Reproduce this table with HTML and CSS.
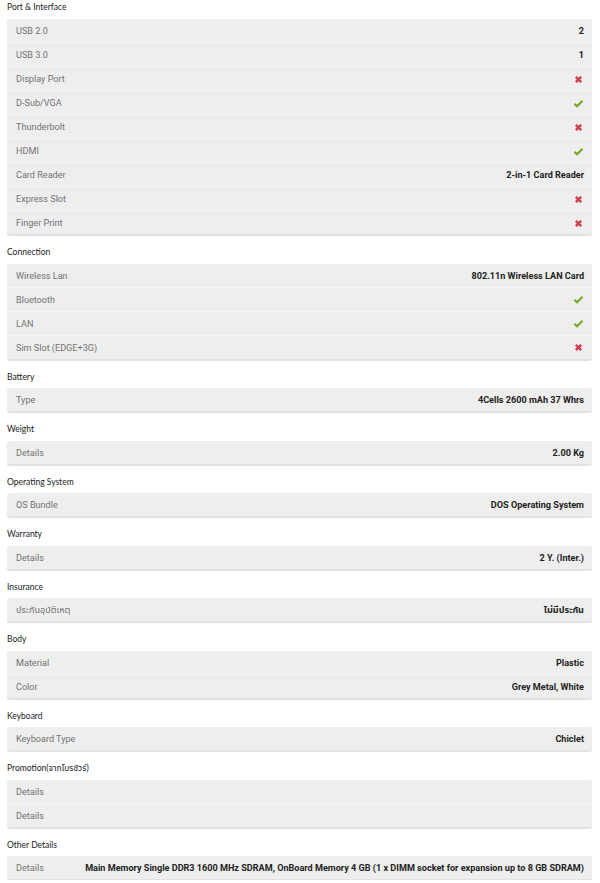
FILE: index.html
```html
<!DOCTYPE html>
<html>
<head>
<meta charset="utf-8">
<link rel="stylesheet" href="styles.css">
</head>
<body>
<div class="specs">

<div class="title first">Port &amp; Interface</div>
<div class="card">
  <div class="row"><span class="label">USB 2.0</span><span class="value">2</span></div>
  <div class="row"><span class="label">USB 3.0</span><span class="value">1</span></div>
  <div class="row"><span class="label">Display Port</span><span class="value"><svg class="no" viewBox="0 0 10 10"><path d="M2 2L8 8M8 2L2 8"/></svg></span></div>
  <div class="row"><span class="label">D-Sub/VGA</span><span class="value"><svg class="yes" viewBox="0 0 12 10"><path d="M1.5 5.5L4.5 8L10.5 2"/></svg></span></div>
  <div class="row"><span class="label">Thunderbolt</span><span class="value"><svg class="no" viewBox="0 0 10 10"><path d="M2 2L8 8M8 2L2 8"/></svg></span></div>
  <div class="row"><span class="label">HDMI</span><span class="value"><svg class="yes" viewBox="0 0 12 10"><path d="M1.5 5.5L4.5 8L10.5 2"/></svg></span></div>
  <div class="row"><span class="label">Card Reader</span><span class="value">2-in-1 Card Reader</span></div>
  <div class="row"><span class="label">Express Slot</span><span class="value"><svg class="no" viewBox="0 0 10 10"><path d="M2 2L8 8M8 2L2 8"/></svg></span></div>
  <div class="row"><span class="label">Finger Print</span><span class="value"><svg class="no" viewBox="0 0 10 10"><path d="M2 2L8 8M8 2L2 8"/></svg></span></div>
</div>

<div class="title">Connection</div>
<div class="card">
  <div class="row"><span class="label">Wireless Lan</span><span class="value">802.11n Wireless LAN Card</span></div>
  <div class="row"><span class="label">Bluetooth</span><span class="value"><svg class="yes" viewBox="0 0 12 10"><path d="M1.5 5.5L4.5 8L10.5 2"/></svg></span></div>
  <div class="row"><span class="label">LAN</span><span class="value"><svg class="yes" viewBox="0 0 12 10"><path d="M1.5 5.5L4.5 8L10.5 2"/></svg></span></div>
  <div class="row"><span class="label">Sim Slot (EDGE+3G)</span><span class="value"><svg class="no" viewBox="0 0 10 10"><path d="M2 2L8 8M8 2L2 8"/></svg></span></div>
</div>

<div class="title">Battery</div>
<div class="card">
  <div class="row"><span class="label">Type</span><span class="value">4Cells 2600 mAh 37 Whrs</span></div>
</div>

<div class="title">Weight</div>
<div class="card">
  <div class="row"><span class="label">Details</span><span class="value">2.00 Kg</span></div>
</div>

<div class="title">Operating System</div>
<div class="card">
  <div class="row"><span class="label">OS Bundle</span><span class="value">DOS Operating System</span></div>
</div>

<div class="title">Warranty</div>
<div class="card">
  <div class="row"><span class="label">Details</span><span class="value">2 Y. (Inter.)</span></div>
</div>

<div class="title">Insurance</div>
<div class="card">
  <div class="row"><span class="label">ประกันอุบัติเหตุ</span><span class="value">ไม่มีประกัน</span></div>
</div>

<div class="title">Body</div>
<div class="card">
  <div class="row"><span class="label">Material</span><span class="value">Plastic</span></div>
  <div class="row"><span class="label">Color</span><span class="value">Grey Metal, White</span></div>
</div>

<div class="title">Keyboard</div>
<div class="card">
  <div class="row"><span class="label">Keyboard Type</span><span class="value">Chiclet</span></div>
</div>

<div class="title">Promotion(จากโบรชัวร์)</div>
<div class="card">
  <div class="row"><span class="label">Details</span><span class="value"></span></div>
  <div class="row"><span class="label">Details</span><span class="value"></span></div>
</div>

<div class="title">Other Details</div>
<div class="card">
  <div class="row"><span class="label">Details</span><span class="value">Main Memory Single DDR3 1600 MHz SDRAM, OnBoard Memory 4 GB (1 x DIMM socket for expansion up to 8 GB SDRAM)</span></div>
</div>

</div>
</body>
</html>
```

FILE: styles.css
```css
html, body {
  margin: 0;
  padding: 0;
  background: #ffffff;
}

.specs {
  width: 585px;
  padding: 0 8px 0 7px;
}

.title {
  font-family: Lato, "Noto Sans", "Noto Sans Thai", sans-serif;
  font-size: 8.5px;
  line-height: 12px;
  color: #222222;
  padding: 11px 0 5.5px 0;
}

.title.first {
  padding-top: 1px;
  padding-bottom: 6px;
}

.card {
  background: #eeeeee;
  border-radius: 3px;
  box-shadow: 0 1px 1px rgba(0, 0, 0, 0.12);
}

.row {
  display: flex;
  justify-content: space-between;
  align-items: center;
  gap: 20px;
  box-sizing: border-box;
  height: 24px;
  padding: 1px 8px 0 9px;
  border-bottom: 1px solid #f7f7f7;
  font-family: Roboto, "Noto Sans", "Noto Sans Thai", sans-serif;
  font-size: 9.1px;
}

.row:last-child {
  border-bottom: 1px solid #e2e2e2;
}

.label {
  color: #737373;
  white-space: nowrap;
}

.value {
  color: #222222;
  font-weight: bold;
  white-space: nowrap;
  display: flex;
  align-items: center;
}

.no {
  width: 9px;
  height: 9px;
  fill: none;
  stroke: #d23c4c;
  stroke-width: 2.6;
  margin-right: 1px;
}

.yes {
  width: 11px;
  height: 9px;
  fill: none;
  stroke: #7aa82a;
  stroke-width: 2.4;
}
```
